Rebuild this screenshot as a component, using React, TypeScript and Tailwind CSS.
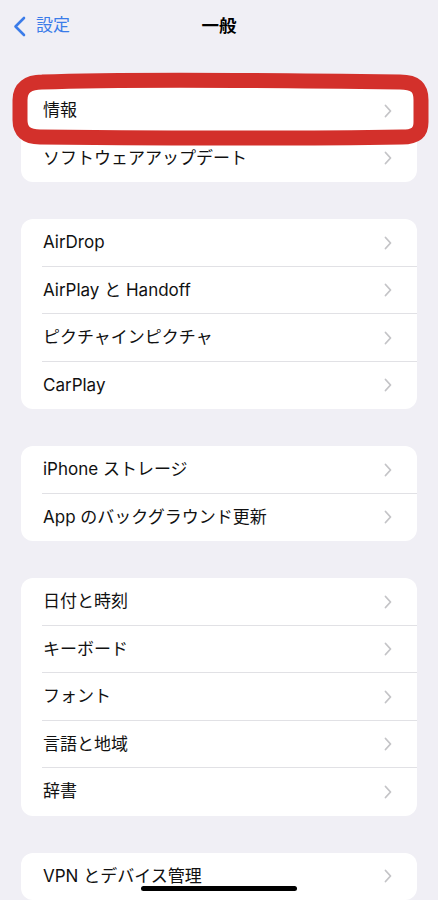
import React from 'react';

const groups: string[][] = [
  ['情報', 'ソフトウェアアップデート'],
  ['AirDrop', 'AirPlay と Handoff', 'ピクチャインピクチャ', 'CarPlay'],
  ['iPhone ストレージ', 'App のバックグラウンド更新'],
  ['日付と時刻', 'キーボード', 'フォント', '言語と地域', '辞書'],
  ['VPN とデバイス管理'],
];

const Chevron: React.FC = () => (
  <svg width="8" height="14" viewBox="0 0 8 14" fill="none">
    <path d="M1.5 1.5 L6.5 7 L1.5 12.5" stroke="#c4c4c7" strokeWidth="1.8" strokeLinecap="round" strokeLinejoin="round" />
  </svg>
);

const Row: React.FC<{ label: string; last: boolean }> = ({ label, last }) => (
  <div className="relative flex h-[47.5px] items-center pl-[22px] pr-[25px]">
    <span className="flex-1 text-[17px] text-[#111]">{label}</span>
    <Chevron />
    {!last && <div className="absolute bottom-0 left-[21px] right-0 h-px bg-[#e1e1e5]" />}
  </div>
);

const App: React.FC = () => {
  return (
    <div
      className="relative h-[900px] w-[438px] overflow-hidden bg-[#f0eff5]"
      style={{ fontFamily: 'Inter, "Noto Sans CJK JP", sans-serif' }}
    >
      <div className="relative flex h-[52px] items-center justify-center">
        <div className="absolute left-[13px] top-0 flex h-full items-center gap-[10px] text-[#3b7ce9]">
          <svg width="13" height="21" viewBox="0 0 13 21" fill="none">
            <path d="M11 2 L2.5 10.5 L11 19" stroke="#3b7ce9" strokeWidth="2.6" strokeLinecap="round" strokeLinejoin="round" />
          </svg>
          <span className="text-[17px]">設定</span>
        </div>
        <h1 className="text-[17.5px] font-bold text-black">一般</h1>
      </div>

      <div className="flex flex-col gap-[37px] px-[21px] pt-[35px]">
        {groups.map((g, i) => (
          <div key={i} className="overflow-hidden rounded-[12px] bg-white">
            {g.map((label, j) => (
              <Row key={label} label={label} last={j === g.length - 1} />
            ))}
          </div>
        ))}
      </div>

      {/* red marker around 情報 */}
      <svg className="pointer-events-none absolute left-0 top-0" width="438" height="200" viewBox="0 0 438 200" fill="none">
        <path
          d="M42 82 C120 79 260 80 400 82 C416 82 421 88 421 100 L421 122 C421 133 415 137 402 137 C280 139 140 138 40 137 C26 137 20 131 20 120 L20 100 C20 88 28 82 42 82 Z"
          stroke="#d3302b"
          strokeWidth="15"
          strokeLinejoin="round"
        />
      </svg>

      {/* home indicator */}
      <div className="absolute bottom-[9px] left-[141px] h-[5px] w-[156px] rounded-full bg-black" />
    </div>
  );
};

export default App;
